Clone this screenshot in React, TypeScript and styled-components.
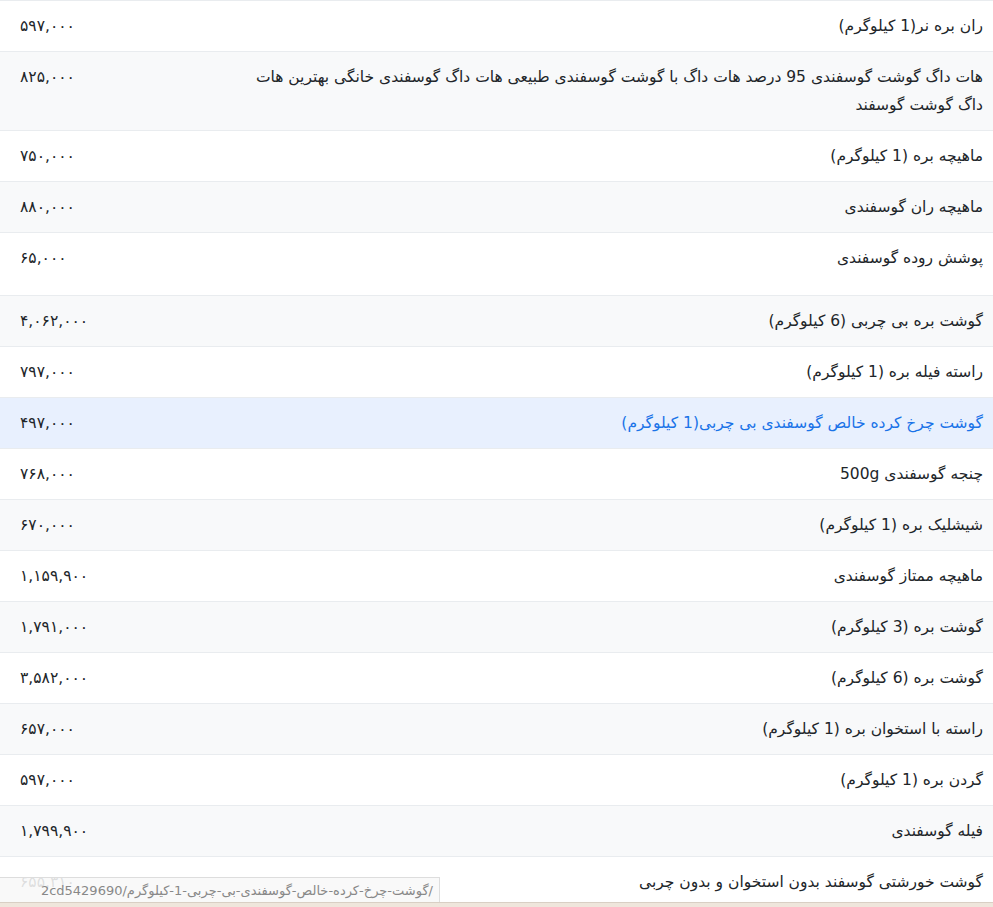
import React from "react";
import styled, { createGlobalStyle } from "styled-components";

const Global = createGlobalStyle`
  html, body { margin: 0; padding: 0; background: #fff; overflow: hidden; }
  body { font-family: "DejaVu Sans", "Noto Sans", sans-serif; }
`;

const Page = styled.div`
  position: relative;
  width: 993px;
  height: 907px;
  overflow: hidden;
  border-top: 1px solid #e9ecef;
  box-sizing: border-box;
`;

const Table = styled.table`
  width: 100%;
  border-collapse: collapse;
  direction: rtl;
  font-size: 15.5px;
  color: #212529;
`;

const Row = styled.tr<{ $stripe: boolean; $active?: boolean }>`
  background: ${(p) => (p.$active ? "#e8f0fe" : p.$stripe ? "#f8f9fa" : "#fff")};
  color: ${(p) => (p.$active ? "#1a73e8" : "#212529")};
  border-bottom: 1px solid #e9ecef;
`;

const Name = styled.td<{ $extra?: number }>`
  text-align: right;
  vertical-align: top;
  padding: 11px 10px ${(p) => 11 + (p.$extra ?? 0)}px 110px;
  line-height: 28px;
`;

const Price = styled.td`
  text-align: left;
  vertical-align: top;
  padding: 11px 20px 11px 20px;
  line-height: 28px;
  white-space: nowrap;
  width: 80px;
  color: #212529;
`;

const Status = styled.div`
  position: absolute;
  left: 0;
  bottom: 4px;
  width: 440px;
  height: 26px;
  background: rgba(248, 248, 248, 0.88);
  border: 1px solid #ddd;
  border-left: none;
  color: #888;
  font-size: 13px;
  line-height: 26px;
  white-space: nowrap;
  overflow: hidden;
  display: flex;
  justify-content: flex-end;
  direction: ltr;
  padding-right: 6px;
  box-sizing: border-box;
`;

const Strip = styled.div`
  position: absolute;
  left: 0;
  right: 0;
  bottom: 0;
  height: 4px;
  background: #efe6dc;
  border-top: 1px solid #d9cfc4;
`;

const rows: [string, string, number?][] = [
  ["ران بره نر(1 کیلوگرم)", "۵۹۷,۰۰۰"],
  ["هات داگ گوشت گوسفندی 95 درصد هات داگ با گوشت گوسفندی طبیعی هات داگ گوسفندی خانگی بهترین هات داگ گوشت گوسفند", "۸۲۵,۰۰۰"],
  ["ماهیچه بره (1 کیلوگرم)", "۷۵۰,۰۰۰"],
  ["ماهیچه ران گوسفندی", "۸۸۰,۰۰۰"],
  ["پوشش روده گوسفندی", "۶۵,۰۰۰", 12],
  ["گوشت بره بی چربی (6 کیلوگرم)", "۴,۰۶۲,۰۰۰"],
  ["راسته فیله بره (1 کیلوگرم)", "۷۹۷,۰۰۰"],
  ["گوشت چرخ کرده خالص گوسفندی بی چربی(1 کیلوگرم)", "۴۹۷,۰۰۰"],
  ["چنجه گوسفندی 500g", "۷۶۸,۰۰۰"],
  ["شیشلیک بره (1 کیلوگرم)", "۶۷۰,۰۰۰"],
  ["ماهیچه ممتاز گوسفندی", "۱,۱۵۹,۹۰۰"],
  ["گوشت بره (3 کیلوگرم)", "۱,۷۹۱,۰۰۰"],
  ["گوشت بره (6 کیلوگرم)", "۳,۵۸۲,۰۰۰"],
  ["راسته با استخوان بره (1 کیلوگرم)", "۶۵۷,۰۰۰"],
  ["گردن بره (1 کیلوگرم)", "۵۹۷,۰۰۰"],
  ["فیله گوسفندی", "۱,۷۹۹,۹۰۰"],
  ["گوشت خورشتی گوسفند بدون استخوان و بدون چربی", "۶۵۵,۳۱۰"],
];

export default function App() {
  return (
    <Page>
      <Global />
      <Table>
        <tbody>
          {rows.map(([n, p, extra], i) => (
            <Row key={i} $stripe={i % 2 === 1} $active={i === 7}>
              <Name $extra={extra}>{n}</Name>
              <Price>{p}</Price>
            </Row>
          ))}
        </tbody>
      </Table>
      <Status>2cd5429690/گوشت-چرخ-کرده-خالص-گوسفندی-بی-چربی-1-کیلوگرم/</Status>
      <Strip />
    </Page>
  );
}
